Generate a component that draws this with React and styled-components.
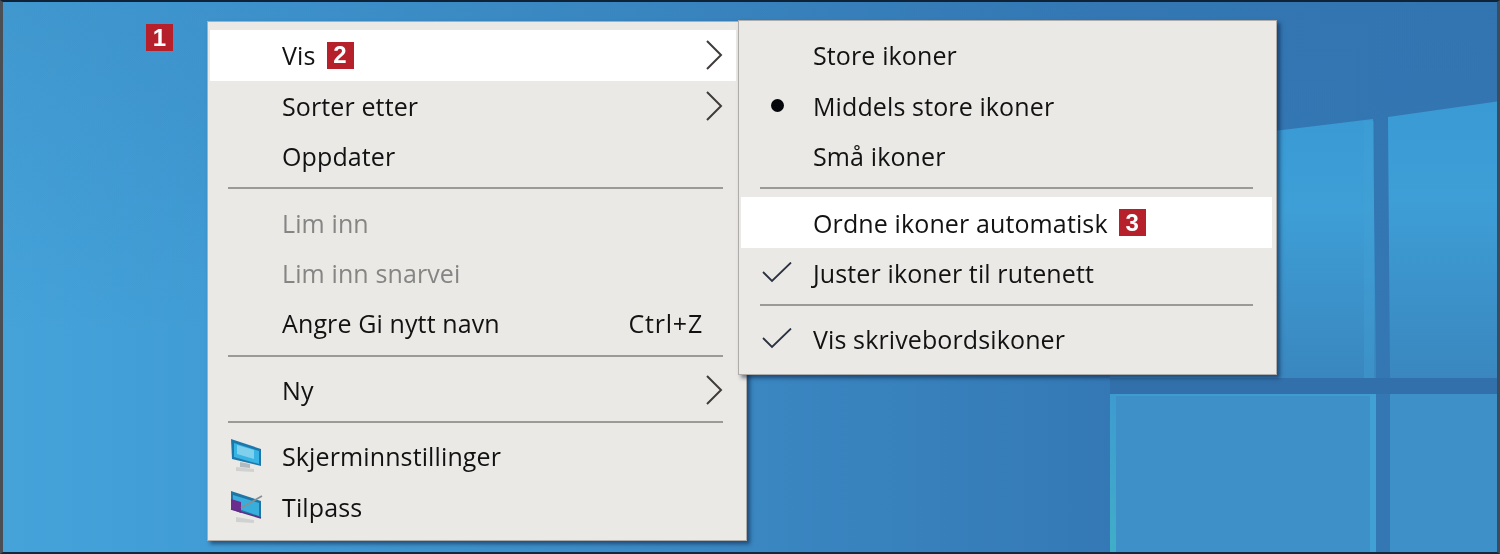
import React from "react";
import styled, { createGlobalStyle } from "styled-components";

const Global = createGlobalStyle`
  html, body { margin: 0; padding: 0; background: #3a87c3; }
  #root { width: 1500px; height: 554px; }
`;

const Desktop = styled.div`
  position: relative;
  box-sizing: border-box;
  width: 1500px;
  height: 554px;
  overflow: hidden;
  display: flex;
  align-items: flex-start;
  padding: 19px 0 0 143px;
  background: #3a87c3;
  border-style: solid;
  border-color: #0f2338 #3b4c5c #14263c #4a4f55;
  border-width: 2px 3px 2px 3px;
  font-family: "Open Sans", "Noto Sans", sans-serif;
`;

const Wallpaper = styled.svg`
  position: absolute;
  left: -3px;
  top: -2px;
  width: 1500px;
  height: 554px;
`;

const Badge = styled.span`
  flex: none;
  display: inline-flex;
  align-items: center;
  justify-content: center;
  width: 27px;
  height: 27px;
  background: #b6202b;
  color: #fff;
  font-family: "Liberation Sans", Arial, sans-serif;
  font-weight: 700;
  font-size: 24px;
  letter-spacing: 0;
  line-height: 1;
  filter: blur(0.4px);
`;

const OuterBadge = styled(Badge)`
  position: relative;
  margin: 3px 34px 0 0;
`;

const RowBadge = styled(Badge)`
  margin-left: 11px;
`;

const Menu = styled.div`
  position: relative;
  flex: none;
  box-sizing: border-box;
  width: 540px;
  height: 520px;
  padding: 8.3px 10px 0 2px;
  background: #ebe9e6;
  border: 1px solid #aeadab;
  box-shadow: 3px 3px 4px rgba(8, 28, 62, 0.55);
`;

const SubMenu = styled(Menu)`
  position: absolute;
  left: 530px;
  top: -2px;
  width: 539px;
  height: 355px;
  padding: 9.3px 4px 0 2px;
`;

const Row = styled.div`
  display: flex;
  align-items: center;
  height: 50.4px;
  padding-right: 13px;
  font-size: 25px;
  letter-spacing: 0.12px;
  color: ${(p) => (p.$disabled ? "#858584" : "#121212")};
  background: ${(p) => (p.$highlight ? "#ffffff" : "transparent")};
`;

const Gutter = styled.span`
  flex: none;
  display: flex;
  align-items: center;
  justify-content: center;
  width: 72px;
  height: 100%;
`;

const Label = styled.span`
  white-space: nowrap;
  filter: blur(0.4px);
`;

const Shortcut = styled.span`
  margin-left: auto;
  margin-right: 20px;
  white-space: nowrap;
  letter-spacing: 0.8px;
  filter: blur(0.4px);
`;

const Arrow = styled.svg`
  margin-left: auto;
  width: 18px;
  height: 32px;
`;

const Dot = styled.span`
  width: 13px;
  height: 13px;
  border-radius: 50%;
  background: #05070d;
`;

const Separator = styled.div`
  box-sizing: border-box;
  height: 16px;
  padding: 6px ${(p) => p.$end}px 0 ${(p) => p.$start}px;
  &::before {
    content: "";
    display: block;
    height: 2px;
    background: #9c9a97;
  }
`;

const Chevron = () => (
  <Arrow viewBox="0 0 18 32">
    <path d="M2 2 L16 16 L2 30" fill="none" stroke="#3f3b3a" strokeWidth="2" />
  </Arrow>
);

const Check = () => (
  <svg width="32" height="22" viewBox="0 0 32 22">
    <path d="M2 10 L11 19 L30 0.5" fill="none" stroke="#2a3140" strokeWidth="1.8" />
  </svg>
);

const DisplayIcon = () => (
  <svg width="36" height="36" viewBox="0 0 36 36">
    <path d="M8 29 L26 31 L26 34 L8 33 Z" fill="#cfd2d1" />
    <path d="M12 24 L22 26 L22 30 L12 29 Z" fill="#b1bbbf" />
    <path d="M3 1 L33 11 L33 28 L4 21 Z" fill="#1c78aa" />
    <path d="M6 5 L31 13 L31 26 L6 19 Z" fill="#38b4e4" />
    <path d="M9 7 L26 12 L26 21 L9 16 Z" fill="#7fd0ec" />
  </svg>
);

const PersonalizeIcon = () => (
  <svg width="36" height="36" viewBox="0 0 36 36">
    <path d="M8 28 L26 31 L26 34 L8 33 Z" fill="#cfd2d1" />
    <path d="M3 2 L33 12 L33 29 L3 20 Z" fill="#1f76a6" />
    <path d="M5 6 L31 14 L31 27 L5 18 Z" fill="#38aedd" />
    <path d="M3 10 L13 13 L13 24 L3 20 Z" fill="#6a2d8f" />
    <path d="M3 20 L33 29" stroke="#5b2f86" strokeWidth="1.5" />
    <path d="M13 19 L34 7" stroke="#8a8f92" strokeWidth="1.8" />
  </svg>
);

const mainTop = [
  { label: "Vis", badge: 2, highlight: true, arrow: true },
  { label: "Sorter etter", arrow: true },
  { label: "Oppdater" },
];
const mainEdit = [
  { label: "Lim inn", disabled: true },
  { label: "Lim inn snarvei", disabled: true },
  { label: "Angre Gi nytt navn", shortcut: "Ctrl+Z" },
];
const mainNew = [{ label: "Ny", arrow: true }];
const mainTools = [
  { label: "Skjerminnstillinger", icon: <DisplayIcon /> },
  { label: "Tilpass", icon: <PersonalizeIcon /> },
];
const subSizes = [
  { label: "Store ikoner" },
  { label: "Middels store ikoner", icon: <Dot /> },
  { label: "Små ikoner" },
];
const subArrange = [
  { label: "Ordne ikoner automatisk", badge: 3, highlight: true },
  { label: "Juster ikoner til rutenett", icon: <Check /> },
];
const subShow = [{ label: "Vis skrivebordsikoner", icon: <Check /> }];

const Item = ({ label, badge, highlight, disabled, arrow, shortcut, icon }) => (
  <Row $highlight={highlight} $disabled={disabled}>
    <Gutter>{icon}</Gutter>
    <Label>{label}</Label>
    {badge && <RowBadge>{badge}</RowBadge>}
    {shortcut && <Shortcut>{shortcut}</Shortcut>}
    {arrow && <Chevron />}
  </Row>
);

const Group = ({ items }) => items.map((it) => <Item key={it.label} {...it} />);

export default function App() {
  return (
    <>
      <Global />
      <Desktop>
        <Wallpaper viewBox="0 0 1500 554">
          <defs>
            <linearGradient id="sky" x1="0" y1="0" x2="1" y2="0">
              <stop offset="0" stopColor="#45a3da" />
              <stop offset="0.14" stopColor="#419cd5" />
              <stop offset="0.5" stopColor="#3a87c2" />
              <stop offset="0.74" stopColor="#3479b6" />
              <stop offset="1" stopColor="#3376b2" />
            </linearGradient>
            <linearGradient id="shade" x1="0" y1="0" x2="0" y2="1">
              <stop offset="0" stopColor="#2f6fa8" stopOpacity="0.22" />
              <stop offset="0.6" stopColor="#2f6fa8" stopOpacity="0" />
            </linearGradient>
            <linearGradient id="pane" x1="0" y1="0" x2="0" y2="1">
              <stop offset="0" stopColor="#3a9ad4" />
              <stop offset="0.35" stopColor="#3e9ed6" />
              <stop offset="1" stopColor="#3a87bf" />
            </linearGradient>
            <linearGradient id="strip" x1="0" y1="0" x2="0" y2="1">
              <stop offset="0" stopColor="#3e9bd0" />
              <stop offset="1" stopColor="#40aec8" />
            </linearGradient>
          </defs>
          <rect width="1500" height="554" fill="url(#sky)" />
          <rect width="1500" height="554" fill="url(#shade)" />
          <rect x="1110" y="378" width="390" height="16" fill="#3270ab" />
          <polygon points="1110,151 1373,119 1376,378 1110,378" fill="url(#pane)" />
          <rect x="1364" y="121" width="10" height="257" fill="#42a2d6" opacity="0.35" />
          <polygon points="1388,117 1500,101 1500,378 1390,378" fill="url(#pane)" />
          <rect x="1110" y="394" width="266" height="160" fill="#3e90c8" />
          <rect x="1110" y="394" width="266" height="2" fill="#3f9cd0" />
          <rect x="1110" y="394" width="6" height="160" fill="url(#strip)" />
          <rect x="1370" y="394" width="6" height="160" fill="#41a0d4" />
          <rect x="1390" y="394" width="110" height="160" fill="#3e90c8" />
        </Wallpaper>
        <OuterBadge>1</OuterBadge>
        <Menu>
          <Group items={mainTop} />
          <Separator $start={18} $end={13} />
          <Group items={mainEdit} />
          <Separator $start={18} $end={13} />
          <Group items={mainNew} />
          <Separator $start={18} $end={13} />
          <Group items={mainTools} />
          <SubMenu>
            <Group items={subSizes} />
            <Separator $start={19} $end={19} />
            <Group items={subArrange} />
            <Separator $start={19} $end={19} />
            <Group items={subShow} />
          </SubMenu>
        </Menu>
      </Desktop>
    </>
  );
}
